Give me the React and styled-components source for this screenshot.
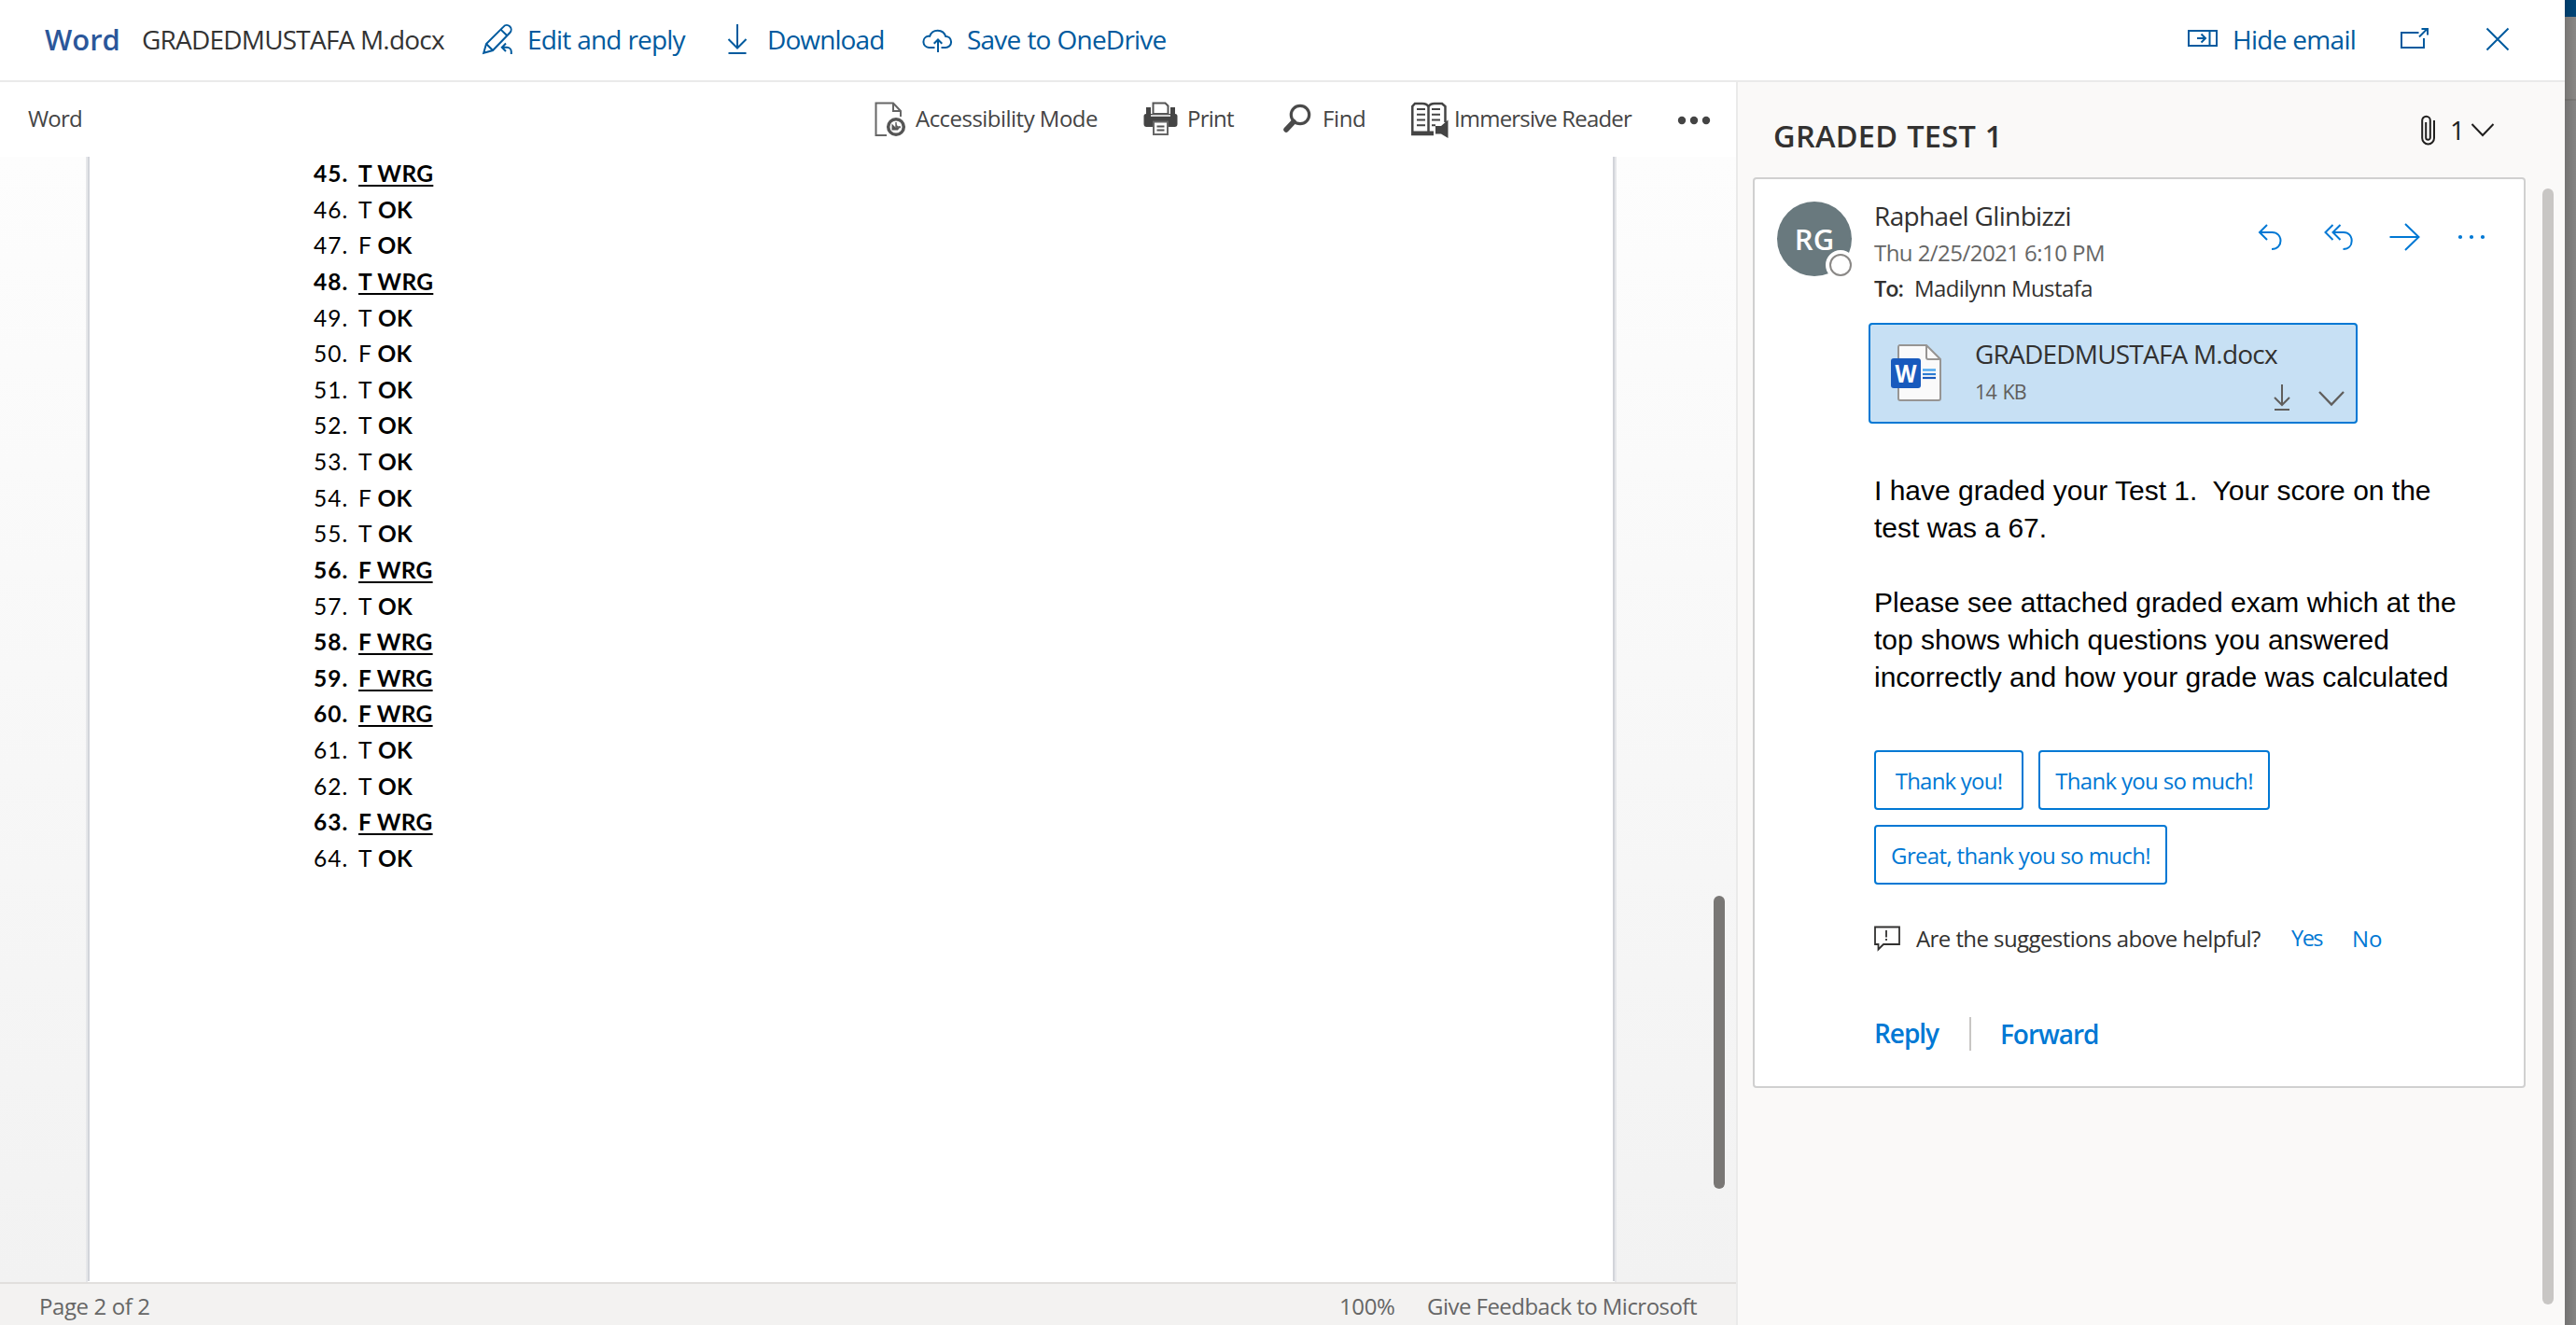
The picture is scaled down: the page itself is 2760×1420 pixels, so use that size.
import React from 'react';
import styled, { createGlobalStyle } from 'styled-components';

const theme = {
  link: '#005a9e',
  primary: '#0078d4',
  text: '#323130',
  muted: '#605e5c',
  ui: '"Open Sans", "Noto Sans", sans-serif',
};

const GlobalStyle = createGlobalStyle`
  body {
    margin: 0;
    background: white;
    overflow: hidden;
    font-family: ${theme.ui};
  }
  *, *::after { box-sizing: border-box; }
  svg { display: block; flex: none; fill: none; overflow: visible; }
`;

const Screen = styled.div`
  display: grid;
  grid-template-columns: 2748px 12px;
  height: 1420px;
`;
const Viewer = styled.div`
  display: grid;
  grid-template-rows: 88px 1fr;
  min-height: 0;
`;
const Label = styled.span`
  white-space: pre;
  font-size: ${props => props.$size || 24}px;
  font-weight: ${props => props.$weight || 400};
  letter-spacing: ${props => props.$track || 0}px;
  word-spacing: ${props => props.$space || 0}px;
`;

/* header */
const Header = styled.header`
  display: flex;
  align-items: center;
  padding: 0 0 3px 48px;
  border-bottom: 2px solid #eaeaea;
  color: ${theme.link};
`;
const Brand = styled.div`
  width: 104px;
  color: #2b579a;
`;
const FileName = styled.div`
  width: 365px;
  color: #333;
`;
const HeaderButton = styled.div`
  display: flex;
  align-items: center;
  gap: 16px;
  width: ${props => props.$width}px;
  svg {
    stroke: ${theme.link};
    stroke-width: 2;
  }
`;
const HeaderRight = styled.div`
  display: flex;
  align-items: center;
  margin-left: auto;
`;

/* word pane */
const Main = styled.div`
  display: grid;
  grid-template-columns: 1860px 1fr;
  min-height: 0;
`;
const WordPane = styled.section`
  display: grid;
  grid-template-rows: 80px 1fr 46px;
  min-height: 0;
`;
const Toolbar = styled.div`
  display: flex;
  align-items: center;
  padding-left: 30px;
  color: #444;
`;
const AppName = styled.div`
  flex: 1;
  margin-top: -3px;
`;
const Tool = styled.div`
  display: flex;
  align-items: center;
  gap: 4px;
  width: ${props => props.$width}px;
  ${Label} { margin-top: -3px; }
`;
const Canvas = styled.div`
  display: grid;
  grid-template-columns: 92px 1640px 104px 12px;
  background: linear-gradient(#fdfdfd, #f2f2f2);
  overflow: hidden;
`;
const Page = styled.div`
  grid-column: 2;
  background: white;
  border: solid #e6e7ea;
  border-width: 0 2px;
  overflow: hidden;
`;
const Sheet = styled.div`
  height: 100%;
  padding: 0 0 0 240px;
  border: solid #d2d4da;
  border-width: 0 2px;
`;
const AnswerList = styled.div`
  margin-top: -1px;
`;
const Answer = styled.div`
  display: grid;
  grid-template-columns: 48px auto;
  height: 38.63px;
  line-height: 38.63px;
  font-family: Lato, sans-serif;
  font-size: 24.5px;
  font-weight: ${props => (props.$wrong ? 700 : 400)};
  color: black;
  white-space: pre;
  b {
    margin-left: 1px;
    letter-spacing: 0.2px;
  }
`;
const Num = styled.span`
  letter-spacing: 1px;
`;
const Mark = styled.u`
  justify-self: start;
  letter-spacing: 0.3px;
  text-decoration-thickness: 2px;
  text-underline-offset: 3px;
  text-decoration-skip-ink: none;
`;
const DocScroll = styled.div`
  grid-column: 4;
  height: 314px;
  margin-top: 792px;
  border-radius: 6px;
  background: #797775;
`;
const StatusBar = styled.footer`
  display: flex;
  align-items: center;
  padding: 2px 0 0 42px;
  border-top: 2px solid #e1dfdd;
  background: #f3f2f1;
  color: #666;
`;
const Zoom = styled.div`
  margin-left: auto;
  width: 94px;
`;
const Feedback = styled.div`
  width: 331px;
`;

/* email pane */
const EmailPane = styled.aside`
  display: grid;
  grid-template: 102px 1fr / 828px 12px;
  column-gap: 18px;
  align-items: start;
  padding-left: 16px;
  border-left: 2px solid #eaeaea;
  background: #faf9f8;
`;
const Subject = styled.div`
  grid-column: 1 / 3;
  display: flex;
  align-items: center;
  height: 102px;
  padding: 12px 0 0 22px;
  color: ${theme.text};
`;
const AttachCount = styled.div`
  display: flex;
  align-items: center;
  margin: -12px 62px 0 auto;
  color: #201f1e;
`;
const Count = styled.div`
  width: 36px;
  padding-left: 15px;
`;
const Card = styled.article`
  width: 828px;
  height: 976px;
  padding-top: 19px;
  border: 2px solid #d0d0d0;
  border-radius: 4px;
  background: white;
`;
const EmailScroll = styled.div`
  height: 1196px;
  margin-top: 12px;
  border-radius: 6px;
  background: #c8c6c4;
`;
const CardHead = styled.div`
  display: flex;
  padding: 0 20px 0 24px;
  margin-bottom: 18px;
`;
const Avatar = styled.div`
  position: relative;
  width: 80px;
  height: 80px;
  margin: 5px 24px 0 0;
  border-radius: 50%;
  background: #69797e;
  color: white;
  text-align: center;
  line-height: 80px;
`;
const Presence = styled.i`
  position: absolute;
  right: -4px;
  bottom: -4px;
  width: 32px;
  height: 32px;
  border: 4px solid white;
  border-radius: 50%;
  background: white;
  &::after {
    content: '';
    display: block;
    width: 24px;
    height: 24px;
    border: 2px solid #8a8886;
    border-radius: 50%;
  }
`;
const Sender = styled.div`
  flex: 1;
  color: ${theme.text};
`;
const SenderLine = styled.div`
  display: flex;
  height: ${props => props.$height}px;
  line-height: ${props => props.$height}px;
  color: ${props => (props.$muted ? '#666' : 'inherit')};
`;
const ToLabel = styled.div`
  width: 43px;
`;
const Actions = styled.div`
  display: flex;
  height: 40px;
  margin-top: 23px;
  svg {
    margin: 0 16px;
    stroke: ${theme.primary};
    stroke-width: 2;
  }
`;
const Attachment = styled.div`
  display: flex;
  width: 524px;
  height: 108px;
  margin-left: 122px;
  padding: 10px 8px 0 21px;
  gap: 35px;
  border: 2px solid ${theme.primary};
  border-radius: 4px;
  background: #c7e0f4;
  > svg { margin-top: 10px; }
`;
const AttachInfo = styled.div`
  flex: 1;
  color: ${theme.text};
`;
const AttachName = styled.div`
  height: 44px;
  line-height: 43px;
`;
const AttachMeta = styled.div`
  display: flex;
  gap: 17px;
  line-height: 36px;
  color: ${theme.muted};
  ${Label} { flex: 1; }
  svg {
    margin-top: 6px;
    stroke: ${theme.muted};
    stroke-width: 2;
  }
`;
const Message = styled.div`
  margin: 52px 0 58px 128px;
  font: 30px/40px "Liberation Sans", Arial, sans-serif;
  color: black;
  white-space: pre;
`;
const Suggestions = styled.div`
  display: flex;
  flex-wrap: wrap;
  gap: 16px;
  width: 560px;
  margin-left: 128px;
`;
const Suggestion = styled.div`
  width: ${props => props.$width}px;
  height: 64px;
  border: 2px solid ${theme.primary};
  border-radius: 4px;
  color: ${theme.primary};
  text-align: center;
  line-height: 61px;
`;
const Helpful = styled.div`
  display: flex;
  align-items: center;
  height: 40px;
  margin: 37px 0 65px 128px;
  color: ${theme.text};
`;
const Question = styled.div`
  width: 402px;
  margin-left: 17px;
`;
const Choice = styled.div`
  width: 65px;
  color: ${theme.primary};
`;
const Footer = styled.div`
  display: flex;
  align-items: center;
  height: 36px;
  margin-left: 128px;
  color: ${theme.primary};
`;
const ReplyLink = styled.div`
  width: 104px;
  height: 36px;
  line-height: 34px;
  margin-right: 31px;
  border-right: 2px solid #c8c6c4;
`;

/* what is left of the mailbox behind the viewer */
const Backdrop = styled.div`
  background:
    linear-gradient(90deg, rgba(0, 0, 0, 0.13), transparent),
    linear-gradient(#004578 18px, #8a8886 18px, #8a8886 106px, #7c7a78 106px, #7c7a78 108px, #858483 108px);
`;

const EditIcon = () => (
  <svg width="32" height="32">
    <path d="M1.2 30.8 4 21 22.5 2.6A4.6 4.6 0 0 1 29.4 9L11 28ZM4 21l7 7M19.5 5.6l6.9 6.6" />
    <path d="m25 20.5-4.2 4.3 4.2 4.2M21 24.8h5.2a4.6 4.6 0 0 1 4.6 4.6V32" />
  </svg>
);
const DownloadIcon = () => (
  <svg width="32" height="32">
    <path d="M16 0v25.5M6.5 16l9.5 9.5 9.5-9.5M6.5 31h19" />
  </svg>
);
const CloudIcon = () => (
  <svg width="32" height="32">
    <path d="M13.5 25H7.2a6.2 6.2 0 0 1-.6-12.3q.8-.1 1.6.1A8.9 8.9 0 0 1 25.2 13c3.8.1 5.9 3 5.9 6a6 6 0 0 1-6 6h-4.6M17 30V16.5m-4.3 4.3 4.3-4.3 4.3 4.3" />
  </svg>
);
const HideIcon = () => (
  <svg width="32" height="32">
    <path d="M1 7h30v16H1zM23.5 7v16M10 15h8.5M14.5 10.5 19 15l-4.5 4.5" />
  </svg>
);
const PopoutIcon = () => (
  <svg width="32" height="32">
    <path d="M20.5 9H2v16h24V15M21 13.5 29.5 5M23.5 5H30v6.5" />
  </svg>
);
const CloseIcon = () => (
  <svg width="32" height="32">
    <path d="m4.5 4.500 23 23m0-23-23 23" />
  </svg>
);
const AccessibilityIcon = () => (
  <svg width="40" height="40" stroke="#666">
    <path d="M13 37H1.500V2.500H20L28 11v6M20 2.500V11h8" strokeWidth="2" />
    <circle cx="23" cy="28" r="8.300" strokeWidth="3.500" stroke="#555" />
    <path d="M18.500 24.500V31.500H25l3-4.500-3 .5-2-3v4.500z" fill="#555" stroke="none" />
    <path d="M23 23v5.500h5" strokeWidth="1.500" />
  </svg>
);
const PrintIcon = () => (
  <svg width="43" height="40">
    <path d="M3 7h5v7H3zM29 7h5v7h-5zM3 14h31a2.500 2.500 0 0 1 2.500 2.500V25a3 3 0 0 1-3 3H3.500a3 3 0 0 1-3-3v-8.500A2.500 2.500 0 0 1 3 14Z" fill="#444" />
    <path d="M10.500 2.500h13l3 3V14h-16z" fill="white" stroke="#555" strokeWidth="2" />
    <path d="M8 16h21" stroke="white" strokeWidth="1.500" />
    <path d="M11 22.500h15V36H11z" fill="white" stroke="#666" strokeWidth="2" />
    <path d="M14.500 27.500h8M14.500 31.500h8" stroke="#555" strokeWidth="2" />
  </svg>
);
const FindIcon = () => (
  <svg width="38" height="40" stroke="#4a4a4a">
    <circle cx="18" cy="15" r="9.700" strokeWidth="3.200" />
    <path d="m11 22.500-8 8.500" strokeWidth="5.500" strokeLinecap="round" />
  </svg>
);
const ReaderIcon = () => (
  <svg width="42" height="40" stroke="#444">
    <path d="M18.500 6.500C17 3 14 3 12 3H4L1.300 6v30H24M18.500 6.500C20 3 23 3 25 3h8l3.500 3v17M18.500 6v30" strokeWidth="2.500" />
    <path d="M6 9h9M6 14.700h9M6 20.500h9M6 26.200h9M22 9h9M22 14.700h9M22 20.500h9M22 26.200h4" strokeWidth="2" />
    <path d="M1 34h23" strokeWidth="3" />
    <path d="M26 27h6l7.500-6.500V40L32 35.500h-6z" fill="#444" stroke="none" />
  </svg>
);
const MoreIcon = () => (
  <svg width="40" height="40">
    {[5, 18, 31].map(x => <circle key={x} cx={x} cy="21" r="4.200" fill="#444" />)}
  </svg>
);
const ClipIcon = () => (
  <svg width="16" height="32" stroke="#201f1e" strokeWidth="2">
    <path d="M14 6v19a6.400 6.400 0 0 1-12.800 0V6a4.300 4.300 0 0 1 8.600 0v18.500a2.300 2.300 0 0 1-4.600 0V8" />
  </svg>
);
const CountChevron = () => (
  <svg width="28" height="32" stroke="#201f1e" strokeWidth="2">
    <path d="m2.500 10 11.500 12L25.500 10" />
  </svg>
);
const ReplyIcon = () => (
  <svg width="40" height="40">
    <path d="m17 7-8 8 8 8M9 15h13.500c5.500 0 9 4 9 9s-3.500 9-9.500 9" />
  </svg>
);
const ReplyAllIcon = () => (
  <svg width="40" height="40">
    <path d="m15.500 7-8 8 8 8M23.500 7l-8 8 8 8M15.500 15H27c5.500 0 8.700 4 8.700 9S32.500 33 26.500 33" />
  </svg>
);
const ForwardIcon = () => (
  <svg width="40" height="40">
    <path d="M4.500 20h31M21 6l14.500 14L21 34" />
  </svg>
);
const DotsIcon = () => (
  <svg width="40" height="40">
    {[8, 20, 32].map(x => <circle key={x} cx={x} cy="20" r="2.100" fill={theme.primary} stroke="none" />)}
  </svg>
);
const WordFileIcon = () => (
  <svg width="56" height="64">
    <path d="M10 2h29l15 15v42a2 2 0 0 1-2 2H11a2 2 0 0 1-2-2V4a2 2 0 0 1 1-2Z" fill="#fafafa" stroke="#979593" strokeWidth="2" />
    <path d="M39 2v13a2 2 0 0 0 2 2h13" stroke="#979593" strokeWidth="2" />
    <path d="M35 28.500h14" stroke="#50a8ee" strokeWidth="2.500" />
    <path d="M35 33h14" stroke="#2b7cd3" strokeWidth="2.200" />
    <path d="M35 37h14" stroke="#185abd" strokeWidth="2.200" />
    <rect x="1" y="16" width="32" height="32" rx="3" fill="#185abd" />
    <text x="17" y="42" textAnchor="middle" fontFamily="Open Sans" fontSize="27" fontWeight="700" textLength="23" lengthAdjust="spacingAndGlyphs" fill="white">W</text>
  </svg>
);
const SmallDownloadIcon = () => (
  <svg width="36" height="36">
    <path d="M18 4v22M10 18l8 8 8-8M10 31h16" />
  </svg>
);
const ChevronIcon = () => (
  <svg width="36" height="36">
    <path d="m5 12 13 13.500L31 12" strokeWidth="2.300" />
  </svg>
);
const CommentIcon = () => (
  <svg width="28" height="28" stroke="#323130" strokeWidth="1.800">
    <path d="M1 2.500h26v18.500H10L4.500 26.500V21H1zM13 6v7.500M13 15v2" />
  </svg>
);

const answers = ['T WRG', 'T', 'F', 'T WRG', 'T', 'F', 'T', 'T', 'T', 'F', 'T', 'F WRG', 'T', 'F WRG', 'F WRG', 'F WRG', 'T', 'T', 'F WRG', 'T'];

export default function App() {
  return (
    <Screen>
      <GlobalStyle />
      <Viewer>
        <Header>
          <Brand><Label $size={31} $weight={600}>Word</Label></Brand>
          <FileName><Label $size={28} $track={-0.79}>GRADEDMUSTAFA M.docx</Label></FileName>
          <HeaderButton $width={257}>
            <EditIcon />
            <Label $size={28} $track={-0.85} $space={0.5}>Edit and reply</Label>
          </HeaderButton>
          <HeaderButton $width={214}>
            <DownloadIcon />
            <Label $size={28} $track={-0.9}>Download</Label>
          </HeaderButton>
          <HeaderButton>
            <CloudIcon />
            <Label $size={28} $track={-0.8} $space={0.5}>Save to OneDrive</Label>
          </HeaderButton>
          <HeaderRight>
            <HeaderButton $width={227}>
              <HideIcon />
              <Label $size={28} $track={-0.7}>Hide email</Label>
            </HeaderButton>
            <HeaderButton $width={89}><PopoutIcon /></HeaderButton>
            <HeaderButton $width={88}><CloseIcon /></HeaderButton>
          </HeaderRight>
        </Header>
        <Main>
          <WordPane>
            <Toolbar>
              <AppName><Label $track={-0.8}>Word</Label></AppName>
              <Tool $width={288}><AccessibilityIcon /><Label $track={-0.53}>Accessibility Mode</Label></Tool>
              <Tool $width={150}><PrintIcon /><Label $track={-0.75}>Print</Label></Tool>
              <Tool $width={137}><FindIcon /><Label $track={-0.4}>Find</Label></Tool>
              <Tool $width={285}><ReaderIcon /><Label $track={-0.83}>Immersive Reader</Label></Tool>
              <Tool $width={63}><MoreIcon /></Tool>
            </Toolbar>
            <Canvas>
              <Page>
                <Sheet>
                  <AnswerList>
                    {answers.map((answer, i) => {
                      const wrong = answer.length > 1;
                      return (
                        <Answer key={i} $wrong={wrong}>
                          <Num>{45 + i}.</Num>
                          {wrong ? <Mark>{answer}</Mark> : <span>{answer} <b>OK</b></span>}
                        </Answer>
                      );
                    })}
                  </AnswerList>
                </Sheet>
              </Page>
              <DocScroll />
            </Canvas>
            <StatusBar>
              <Label $track={-0.4}>Page 2 of 2</Label>
              <Zoom><Label $track={-0.4}>100%</Label></Zoom>
              <Feedback><Label $track={-0.53}>Give Feedback to Microsoft</Label></Feedback>
            </StatusBar>
          </WordPane>
          <EmailPane>
            <Subject>
              <Label $size={32.5} $weight={600} $track={0.3} $space={1}>GRADED TEST 1</Label>
              <AttachCount>
                <ClipIcon />
                <Count><Label $size={28}>1</Label></Count>
                <CountChevron />
              </AttachCount>
            </Subject>
            <Card>
              <CardHead>
                <Avatar>
                  <Label $size={31} $weight={600}>RG</Label>
                  <Presence />
                </Avatar>
                <Sender>
                  <SenderLine $height={40}><Label $size={28} $track={-0.65}>Raphael Glinbizzi</Label></SenderLine>
                  <SenderLine $height={39} $muted><Label $track={-0.55}>Thu 2/25/2021 6:10 PM</Label></SenderLine>
                  <SenderLine $height={38}>
                    <ToLabel><Label $size={23.5} $weight={600} $track={-1}>To:</Label></ToLabel>
                    <Label $track={-0.6}>Madilynn Mustafa</Label>
                  </SenderLine>
                </Sender>
                <Actions>
                  <ReplyIcon />
                  <ReplyAllIcon />
                  <ForwardIcon />
                  <DotsIcon />
                </Actions>
              </CardHead>
              <Attachment>
                <WordFileIcon />
                <AttachInfo>
                  <AttachName><Label $size={28} $track={-0.79}>GRADEDMUSTAFA M.docx</Label></AttachName>
                  <AttachMeta>
                    <Label $size={21.5} $track={-0.9} $space={2}>14 KB</Label>
                    <SmallDownloadIcon />
                    <ChevronIcon />
                  </AttachMeta>
                </AttachInfo>
              </Attachment>
              <Message>
                I have graded your Test 1.{'\u00a0 '}Your score on the<br />
                test was a 67.<br />
                <br />
                Please see attached graded exam which at the<br />
                top shows which questions you answered<br />
                incorrectly and how your grade was calculated
              </Message>
              <Suggestions>
                <Suggestion $width={160}><Label $track={-0.78}>Thank you!</Label></Suggestion>
                <Suggestion $width={248}><Label $track={-0.68}>Thank you so much!</Label></Suggestion>
                <Suggestion $width={314}><Label $track={-0.66}>Great, thank you so much!</Label></Suggestion>
              </Suggestions>
              <Helpful>
                <CommentIcon />
                <Question><Label $track={-0.58}>Are the suggestions above helpful?</Label></Question>
                <Choice><Label $size={23.5} $track={-1.5}>Yes</Label></Choice>
                <Choice><Label>No</Label></Choice>
              </Helpful>
              <Footer>
                <ReplyLink><Label $size={28} $weight={600} $track={-1.05}>Reply</Label></ReplyLink>
                <Label $size={28} $weight={600} $track={-1.05}>Forward</Label>
              </Footer>
            </Card>
            <EmailScroll />
          </EmailPane>
        </Main>
      </Viewer>
      <Backdrop />
    </Screen>
  );
}
